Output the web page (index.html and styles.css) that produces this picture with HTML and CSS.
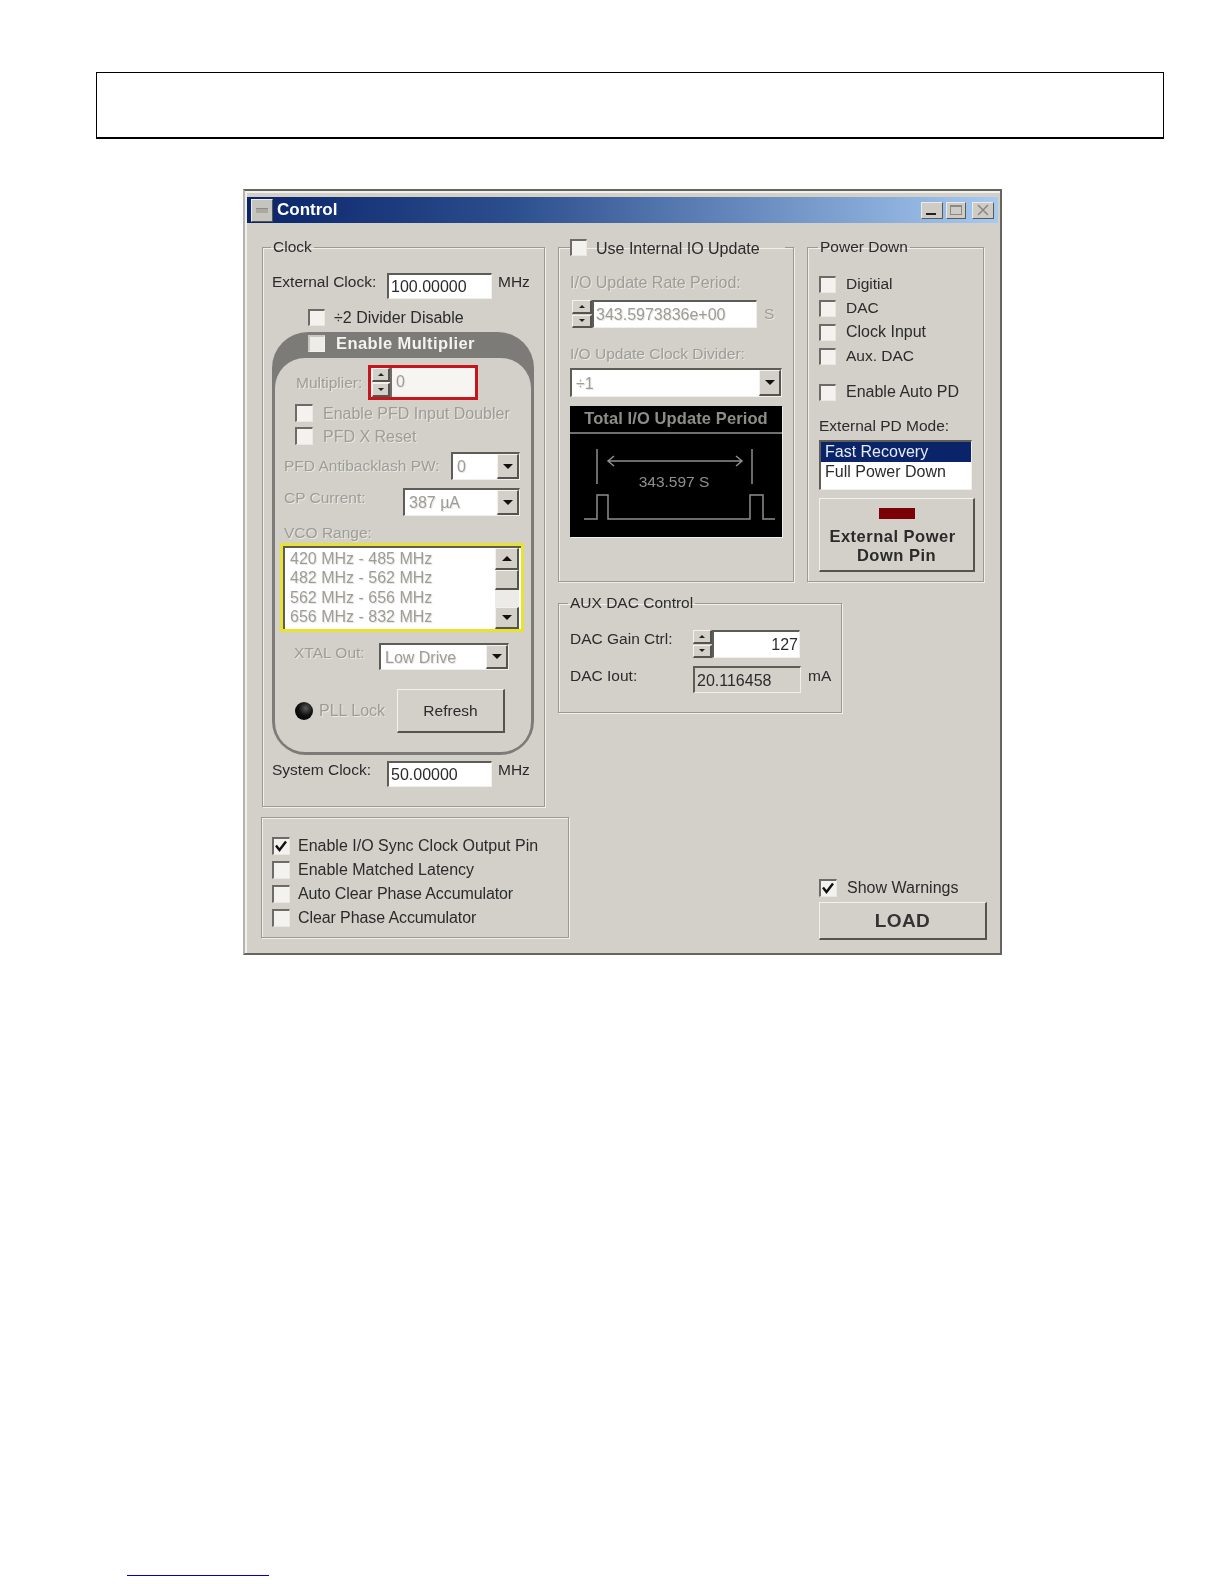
FILE: index.html
```html
<!DOCTYPE html>
<html lang="en">
<head>
<meta charset="utf-8">
<title>Control</title>
<link rel="stylesheet" href="styles.css">
</head>
<body>
<div class="header-box"></div>
<div class="window">
  <div class="titlebar">
    <span class="sysicon"><span class="sysdash"></span></span>
    <span class="title">Control</span>
    <span class="capbtn cap-min"><svg width="14" height="10" viewBox="0 0 14 10"><rect x="1" y="8" width="10" height="2" fill="#222"/></svg></span>
    <span class="capbtn cap-max"><svg width="14" height="12" viewBox="0 0 14 12"><rect x="1.5" y="1.5" width="11" height="9" fill="none" stroke="#8a8986" stroke-width="1"/><rect x="1" y="1" width="12" height="2" fill="#8a8986"/></svg></span>
    <span class="capbtn cap-close"><svg width="14" height="12" viewBox="0 0 14 12"><path d="M2 1L12 11M12 1L2 11" stroke="#8a8986" stroke-width="1.6"/></svg></span>
  </div>
  <div class="body-grid">
    <fieldset class="group g-clock">
      <legend class="legend legend-clock">Clock</legend>
      <div class="row ext-row">
        <span class="lbl w-clock lift">External Clock:</span>
        <div class="sunken input-clock">100.00000</div>
        <span class="lbl lift unit">MHz</span>
      </div>
      <div class="row div-row"><span class="check"></span><span class="lbl big">÷2 Divider Disable</span></div>
      <div class="panel">
        <div class="panel-head"><span class="check check-plain"></span><span class="panel-title">Enable Multiplier</span></div>
        <div class="panel-inner">
          <div class="row mult-row">
            <span class="lbl off w-mult">Multiplier:</span>
            <div class="redbox">
              <div class="spin spin-s"><span class="spin-btn"><i class="up"></i></span><span class="spin-btn"><i class="down"></i></span></div>
              <div class="sunken flat-val off">0</div>
            </div>
          </div>
          <div class="row chk-row first-chk"><span class="check"></span><span class="lbl big off">Enable PFD Input Doubler</span></div>
          <div class="row chk-row second-chk"><span class="check"></span><span class="lbl big off">PFD X Reset</span></div>
          <div class="row pfd-row">
            <span class="lbl off w-pfd">PFD Antibacklash PW:</span>
            <div class="sunken combo w-combo-s"><span class="val off">0</span><span class="drop"><i class="down-big"></i></span></div>
          </div>
          <div class="row cp-row">
            <span class="lbl off w-cp lift">CP Current:</span>
            <div class="sunken combo w-combo-m"><span class="val off">387 µA</span><span class="drop"><i class="down-big"></i></span></div>
          </div>
          <div class="row vco-label"><span class="lbl off">VCO Range:</span></div>
          <div class="yellow">
            <div class="sunken vco-list">
              <div class="vco-items off">
                <div>420 MHz - 485 MHz</div>
                <div>482 MHz - 562 MHz</div>
                <div>562 MHz - 656 MHz</div>
                <div>656 MHz - 832 MHz</div>
              </div>
              <div class="scroll">
                <span class="drop scroll-end"><i class="up-big"></i></span>
                <span class="drop scroll-thumb"></span>
                <span class="scroll-track"></span>
                <span class="drop scroll-end"><i class="down-big"></i></span>
              </div>
            </div>
          </div>
          <div class="row xtal-row">
            <span class="lbl off w-xtal lift">XTAL Out:</span>
            <div class="sunken combo w-combo-l"><span class="val off">Low Drive</span><span class="drop"><i class="down-big"></i></span></div>
          </div>
          <div class="row pll-row">
            <span class="led"></span>
            <span class="lbl big off w-pll">PLL Lock</span>
            <div class="raised refresh">Refresh</div>
          </div>
        </div>
      </div>
      <div class="row sys-row">
        <span class="lbl w-clock lift">System Clock:</span>
        <div class="sunken input-clock">50.00000</div>
        <span class="lbl lift unit">MHz</span>
      </div>
    </fieldset>

    <fieldset class="group g-io">
      <legend class="legend legend-io"><span class="check"></span><span class="lbl big io-title">Use Internal IO Update</span></legend>
      <div class="row io-l1"><span class="lbl big off">I/O Update Rate Period:</span></div>
      <div class="row io-spin">
        <div class="spin spin-m"><span class="spin-btn"><i class="up"></i></span><span class="spin-btn"><i class="down"></i></span></div>
        <div class="sunken io-val off">343.5973836e+00</div>
        <span class="lbl off unit-s">S</span>
      </div>
      <div class="row io-l2"><span class="lbl off">I/O Update Clock Divider:</span></div>
      <div class="sunken combo io-combo"><span class="val off">÷1</span><span class="drop"><i class="down-big"></i></span></div>
      <div class="scope">
        <div class="scope-title">Total I/O Update Period</div>
        <svg class="scope-svg" width="212" height="103" viewBox="0 27 212 103">
          <g fill="none" stroke="#8f8f8c" stroke-width="1.5">
            <path d="M27 42V77M182 42V77"/>
            <path d="M38 54H172M44 49L38 54L44 59M166 49L172 54L166 59"/>
            <path d="M14 112H27V88H38V112H180V88H193V112H205"/>
          </g>
          <text x="104" y="80" text-anchor="middle" class="scope-text">343.597 S</text>
        </svg>
      </div>
    </fieldset>

    <fieldset class="group g-power">
      <legend class="legend legend-power">Power Down</legend>
      <div class="pd-checks">
        <div class="row pd-row"><span class="check"></span><span class="lbl">Digitial</span></div>
        <div class="row pd-row"><span class="check"></span><span class="lbl">DAC</span></div>
        <div class="row pd-row"><span class="check"></span><span class="lbl big">Clock Input</span></div>
        <div class="row pd-row"><span class="check"></span><span class="lbl">Aux. DAC</span></div>
      </div>
      <div class="row pd-row pd-auto"><span class="check"></span><span class="lbl big">Enable Auto PD</span></div>
      <div class="row pd-mode"><span class="lbl">External PD Mode:</span></div>
      <div class="sunken pd-list">
        <div class="pd-item pd-sel">Fast Recovery</div>
        <div class="pd-item">Full Power Down</div>
      </div>
      <div class="raised pd-btn">
        <span class="pd-led"></span>
        <span class="pd-text"><span class="pd-first">External Power</span><br>Down Pin</span>
      </div>
    </fieldset>

    <fieldset class="group g-aux">
      <legend class="legend legend-aux">AUX DAC Control</legend>
      <div class="row aux-gain">
        <span class="lbl w-aux lift-l">DAC Gain Ctrl:</span>
        <div class="spin spin-a"><span class="spin-btn"><i class="up"></i></span><span class="spin-btn"><i class="down"></i></span></div>
        <div class="sunken aux-val">127</div>
      </div>
      <div class="row aux-iout">
        <span class="lbl w-aux lift">DAC Iout:</span>
        <div class="sunken aux-read">20.116458</div>
        <span class="lbl lift unit-ma">mA</span>
      </div>
    </fieldset>

    <div class="group g-sync">
      <div class="row sync-row"><span class="check"><svg class="tick" width="14" height="14" viewBox="0 0 14 14"><path d="M2 6.5L5.5 11L12 2.5" fill="none" stroke="#111" stroke-width="2.4"/></svg></span><span class="lbl">Enable I/O Sync Clock Output Pin</span></div>
      <div class="row sync-row"><span class="check"></span><span class="lbl">Enable Matched Latency</span></div>
      <div class="row sync-row"><span class="check"></span><span class="lbl tight">Auto Clear Phase Accumulator</span></div>
      <div class="row sync-row"><span class="check"></span><span class="lbl tight">Clear Phase Accumulator</span></div>
    </div>

    <div class="g-load">
      <div class="row warn-row"><span class="check"><svg class="tick" width="14" height="14" viewBox="0 0 14 14"><path d="M2 6.5L5.5 11L12 2.5" fill="none" stroke="#111" stroke-width="2.4"/></svg></span><span class="lbl big">Show Warnings</span></div>
      <div class="raised load">LOAD</div>
    </div>
  </div>
</div>
<div class="footer-rule"></div>
</body>
</html>
```

FILE: styles.css
```css
* { box-sizing: border-box; }
html, body { margin: 0; padding: 0; background: #fff; }
body { width: 1224px; height: 1584px; overflow: hidden; padding-top: 72px; font-family: "Liberation Sans", Arial, sans-serif; font-size: 15.5px; color: #2b2b2b; }

.header-box { margin-left: 96px; width: 1068px; height: 67px; border: 1px solid #000; border-bottom-width: 2px; }

.window { margin: 50px 0 0 243px; width: 759px; height: 766px; background: #d3d0ca; border: 2px solid #66645f; border-left-color: #b5b3ad; filter: blur(.45px); box-shadow: inset 2px 2px 0 #f1f0ec; }
.titlebar { display: flex; align-items: center; height: 26px; margin: 6px 2px 0 2px; padding-left: 4px; padding-right: 4px; background: linear-gradient(90deg, #0a246a 0%, #2b4e8e 35%, #a6caf0 100%); }
.sysicon { width: 22px; height: 23px; display: flex; align-items: center; justify-content: center; background: #c6c4be; border: 1px solid; border-color: #eeede9 #55534e #55534e #eeede9; }
.sysdash { width: 12px; height: 5px; background: #a9a8a3; border-top: 1px solid #8c8b86; }
.title { margin-left: 4px; font-weight: 700; font-size: 17px; color: #fff; }
.capbtn { width: 22px; height: 17px; display: flex; align-items: center; justify-content: center; background: #cfccc6; border: 1px solid; border-color: #ecebe7 #5c5a55 #5c5a55 #ecebe7; }
.cap-min { margin-left: auto; }
.cap-max { margin-left: 3px; width: 20px; }
.cap-close { margin-left: 6px; }

.body-grid { display: grid; padding: 15px 0 0 17px; grid-template-columns: 283px 13px 11px 225px 13px 35px 142px 3px; grid-template-rows: 344px 12px 119px 94px 10px 121px; }

.group { margin: 0; padding: 0; min-width: 0; border: 1px solid #9a9994; box-shadow: 1px 1px 0 #f0efeb, inset 1px 1px 0 #f0efeb; }
.legend { padding: 0 2px; height: 18px; line-height: 18px; }
.legend-clock { margin-left: 8px; }
.legend-power { margin-left: 10px; }
.legend-aux { margin-left: 9px; }
.legend-io { margin-left: 11px; padding: 0; width: 215px; display: flex; align-items: center; gap: 9px; }
.io-title { padding-top: 3px; }
.g-clock { grid-column: 1; grid-row: 1 / 5; }
.g-io { grid-column: 3 / 5; grid-row: 1; }
.g-power { grid-column: 6 / 8; grid-row: 1; }
.g-aux { grid-column: 3 / 7; grid-row: 3; }
.g-sync { grid-column: 1 / 4; grid-row: 6; padding: 19px 0 0 10px; margin-left: -1px; font-size: 16px; }
.g-load { grid-column: 6 / 9; grid-row: 4 / 7; align-self: end; padding-left: 12px; margin-bottom: -2px; }

.row { display: flex; align-items: center; }
.lbl { white-space: nowrap; }
.big { font-size: 16px; }
.tight { letter-spacing: -.1px; }
.off { color: #9d9c97; text-shadow: 1px 1px 0 #e9e7e2; }
.lift { margin-bottom: 8px; }
.lift-l { margin-bottom: 10px; }
.unit { margin-left: 6px; }
.unit-s { margin-left: 7px; }
.unit-ma { margin-left: 7px; }
.w-clock { width: 115px; }
.w-mult { width: 72px; }
.w-pfd { width: 167px; }
.w-cp { width: 119px; }
.w-xtal { width: 85px; }
.w-pll { width: 78px; margin-left: 6px; }
.w-aux { width: 123px; }

.check { flex: none; position: relative; width: 17px; height: 17px; background: #f3f2ee; border: 1px solid #e9e7e2; border-top: 2px solid #6d6b66; border-left: 2px solid #6d6b66; }
.check-plain { background: #eeece7; border-color: #c9c7c2 #f3f2ee #f3f2ee #c9c7c2; }
.tick { display: block; }

.sunken { background: #fff; border: 1px solid #f0efeb; border-top: 2px solid #5e5c57; border-left: 2px solid #5e5c57; }
.raised { display: flex; align-items: center; justify-content: center; background: #d3d0ca; border: 1px solid #f3f2ee; border-right: 2px solid #56544f; border-bottom: 2px solid #56544f; }

.input-clock { width: 105px; height: 26px; padding-left: 2px; font-size: 16px; line-height: 24px; white-space: nowrap; }
.ext-row { margin-top: 17px; height: 26px; padding-left: 9px; }
.div-row { margin-top: 10px; height: 17px; padding-left: 45px; gap: 9px; }
.sys-row { margin-top: 6px; height: 26px; padding-left: 9px; }

.panel { margin: 6px 0 0 9px; width: 262px; height: 423px; padding: 0 3px 3px; background: #7c7b78; border-radius: 36px 36px 34px 34px; }
.panel-head { height: 26px; display: flex; align-items: center; padding: 0 0 3px 33px; gap: 11px; }
.panel-title { font-size: 16.5px; font-weight: 700; letter-spacing: .4px; color: #f4f3ef; }
.panel-inner { height: 394px; background: #d3d0ca; border-radius: 30px; overflow: hidden; }

.mult-row { margin-top: 7px; height: 35px; padding-left: 21px; }
.redbox { width: 110px; height: 35px; display: flex; align-items: stretch; padding-left: 1px; border: 3px solid #c4161c; background: #f4f3ef; }
.flat-val { flex: 1; font-size: 16px; padding-left: 4px; line-height: 27px; border-top: 0; border-left: 2px solid #6d6b66; background: #f6f5f2; border-right: 0; border-bottom: 0; }

.spin { flex: none; display: flex; flex-direction: column; gap: 1px; }
.spin-s { width: 18px; }
.spin-m { width: 20px; height: 28px; }
.spin-a { width: 19px; height: 28px; }
.spin-btn { flex: 1; display: flex; align-items: center; justify-content: center; background: #d3d0ca; border: 1px solid #f3f2ee; border-right: 2px solid #56544f; border-bottom: 2px solid #56544f; }
.up { width: 0; height: 0; border: 3px solid transparent; border-top: 0; border-bottom: 3px solid #222; }
.down { width: 0; height: 0; border: 3px solid transparent; border-bottom: 0; border-top: 3px solid #222; }
.up-big { width: 0; height: 0; border: 5px solid transparent; border-top: 0; border-bottom: 5px solid #111; }
.down-big { width: 0; height: 0; border: 5px solid transparent; border-bottom: 0; border-top: 5px solid #111; }

.chk-row { height: 18px; padding-left: 20px; gap: 10px; }
.chk-row .check { width: 18px; height: 18px; margin-top: -2px; }
.first-chk { margin-top: 5px; }
.second-chk { margin-top: 5px; }
.pfd-row { margin-top: 6px; height: 28px; padding-left: 9px; }
.cp-row { margin-top: 8px; height: 28px; padding-left: 9px; }
.vco-label { margin-top: 8px; height: 18px; padding-left: 9px; }
.xtal-row { margin-top: 11px; height: 27px; padding-left: 19px; }
.pll-row { margin-top: 19px; height: 44px; padding-left: 20px; }

.combo { display: flex; align-items: stretch; height: 100%; }
.val { flex: 1; font-size: 16px; padding-left: 4px; align-self: center; padding-top: 1px; white-space: nowrap; }
.drop { flex: none; width: 22px; display: flex; align-items: center; justify-content: center; background: #d3d0ca; border: 1px solid #f3f2ee; border-right: 2px solid #56544f; border-bottom: 2px solid #56544f; }
.w-combo-s { width: 69px; }
.w-combo-m { width: 117px; }
.w-combo-l { width: 130px; }

.yellow { margin: 1px 0 0 5px; width: 244px; height: 89px; border: 3px solid #e8e233; }
.vco-list { display: flex; height: 100%; border-right: 0; border-bottom: 0; }
.vco-items { flex: 1; padding: 1px 0 0 5px; font-size: 16px; line-height: 19.3px; white-space: nowrap; }
.scroll { flex: none; width: 24px; display: flex; flex-direction: column; margin-right: 2px; }
.scroll-end { width: 24px; height: 22px; }
.scroll-thumb { width: 24px; height: 20px; }
.scroll-track { flex: 1; background: #ecebe7; }

.led { flex: none; width: 18px; height: 18px; border-radius: 50%; background: radial-gradient(circle at 60% 35%, #5a5a5a 0, #111 45%, #000 100%); }
.refresh { width: 108px; height: 44px; }

.g-io .row { padding-left: 11px; }
.io-l1 { margin-top: 18px; height: 18px; }
.g-io .io-spin { margin-top: 8px; height: 28px; padding-left: 13px; }
.io-val { width: 165px; height: 28px; padding-left: 2px; font-size: 16px; line-height: 26px; white-space: nowrap; }
.io-l2 { margin-top: 17px; height: 18px; }
.io-combo { margin: 5px 0 0 11px; width: 212px; height: 29px; }
.scope { margin: 9px 0 0 11px; width: 212px; height: 131px; background: #000; box-shadow: 1px 1px 0 #f0efeb; }
.scope-title { height: 28px; border-bottom: 2px solid #6f6f6d; padding-top: 2px; text-align: center; font-weight: 700; font-size: 16.5px; line-height: 20px; letter-spacing: .1px; color: #8d8d8a; white-space: nowrap; }
.scope-svg { display: block; }
.scope-text { font-family: "Liberation Sans", Arial, sans-serif; font-size: 15.5px; fill: #8f8f8c; }

.pd-checks { margin-top: 19px; display: flex; flex-direction: column; gap: 6px; }
.pd-row { height: 18px; padding-left: 11px; gap: 10px; }
.pd-auto { margin-top: 18px; }
.pd-mode { margin-top: 16px; height: 18px; padding-left: 11px; }
.pd-list { margin: 5px 0 0 11px; width: 153px; height: 50px; border-top-width: 2px; }
.pd-item { height: 20px; padding-left: 4px; line-height: 20px; font-size: 16px; white-space: nowrap; }
.pd-sel { background: #0a246a; color: #e8ecf6; }
.pd-btn { margin: 8px 0 0 11px; width: 156px; height: 74px; flex-direction: column; justify-content: flex-start; }
.pd-led { width: 36px; height: 11px; margin-top: 9px; background: #7c0008; }
.pd-text { margin-top: 8px; font-weight: 700; font-size: 16.5px; letter-spacing: .5px; line-height: 19px; text-align: center; white-space: nowrap; }
.pd-first { margin-right: 8px; }

.aux-gain { margin-top: 18px; height: 28px; padding-left: 11px; }
.aux-iout { margin-top: 8px; height: 27px; padding-left: 11px; }
.aux-val { width: 88px; height: 28px; padding-right: 1px; text-align: right; font-size: 16px; line-height: 26px; }
.aux-read { width: 108px; height: 27px; padding-left: 2px; background: #d3d0ca; font-size: 16px; line-height: 26px; }

.sync-row { height: 18px; margin-bottom: 6px; gap: 8px; }
.sync-row .check, .warn-row .check { width: 18px; height: 18px; }
.warn-row { height: 18px; gap: 10px; }
.load { margin-top: 5px; width: 168px; height: 38px; font-weight: 700; font-size: 19px; letter-spacing: .4px; color: #333; }

.footer-rule { margin: 620px 0 0 127px; width: 142px; height: 1px; background: #0000c0; }
```
